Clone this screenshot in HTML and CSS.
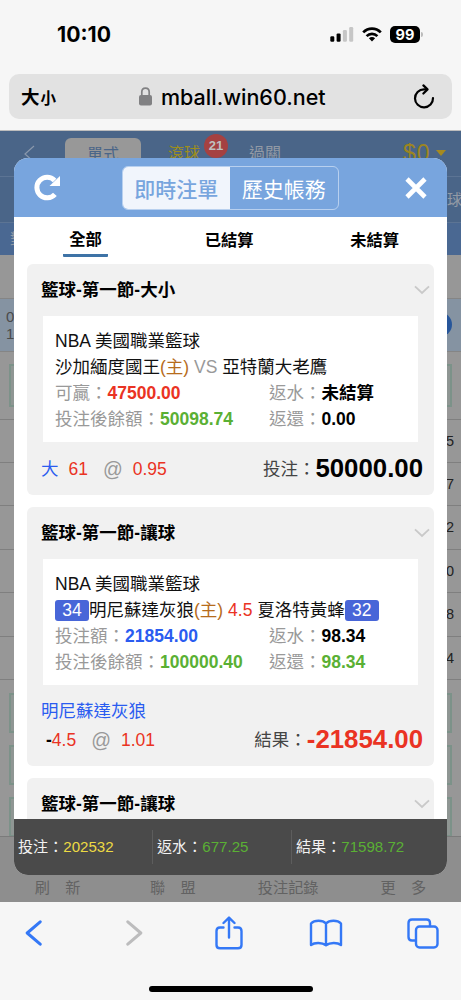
FILE: index.html
```
<!DOCTYPE html>
<html lang="zh-Hant">
<head>
<meta charset="utf-8">
<title>即時注單</title>
<link rel="stylesheet" href="styles.css">
</head>
<body>
<div class="phone">
  <header class="browser-top">
    <div class="status">
      <span class="time">10:10</span>
      <div class="status-icons">
        <svg class="signal" width="24" height="15" viewBox="0 0 24 15"><rect x="0.3" y="9.2" width="4" height="5.6" rx="1.2" fill="#000"/><rect x="6.6" y="6.4" width="4" height="8.4" rx="1.2" fill="#000"/><rect x="12.9" y="3" width="4" height="11.8" rx="1.2" fill="#c6c6c6"/><rect x="19.2" y="0" width="4" height="14.8" rx="1.2" fill="#c6c6c6"/></svg>
        <svg class="wifi" width="20" height="15" viewBox="0 0 20 15" fill="none" stroke="#000" stroke-width="2.7"><path d="M1.2 5.4C6.2 .4 13.8 .4 18.8 5.4"/><path d="M4.6 9.1C7.6 6.1 12.4 6.1 15.4 9.1"/><path d="M10 14.4L6.9 11.3C8.6 9.6 11.4 9.6 13.1 11.3Z" fill="#000" stroke="none"/></svg>
        <span class="battery">99</span><span class="battery-cap"></span>
      </div>
    </div>
    <div class="address">
      <span class="aa">大<small>小</small></span>
      <span class="url"><svg width="13" height="19" viewBox="0 0 13 19"><rect x="0" y="8" width="13" height="10.6" rx="2" fill="#818183"/><path d="M2.8 9V5C2.8-.1 10.2-.1 10.2 5V9" fill="none" stroke="#818183" stroke-width="1.7"/></svg>mball.win60.net</span>
      <svg class="reload" width="22" height="25" viewBox="0 0 22 25" fill="none" stroke="#000" stroke-width="2.2" stroke-linecap="round" stroke-linejoin="round"><path d="M12.5 5.3H11A9 9 0 1 0 20 14"/><path d="M10.4 1.4L14.5 5.4L10.4 9.5"/></svg>
    </div>
  </header>

  <main class="page">
    <div class="backdrop">
      <div class="nav">
        <svg class="nav-back" width="11" height="18" viewBox="0 0 11 18" fill="none" stroke="#8a98ac" stroke-width="1.2"><path d="M10 1L1 9L10 17"/></svg>
        <span class="nav-tab">單式</span>
        <span class="nav-live">滾球</span><span class="nav-badge">21</span>
        <span class="nav-pass">過關</span>
        <span class="nav-money">$0<i></i></span>
      </div>
      <div class="nav-row row-a"><span>球</span></div>
      <div class="nav-row row-b"><span>對</span></div>
      <div class="band-gray"></div>
      <div class="band-blue"><span>0<br>1</span><b>+</b></div>
      <div class="box-row"><div class="box"></div></div>
      <div class="line-row">5</div><div class="line-row mid">7</div>
      <div class="line-row">2</div><div class="line-row mid">0</div>
      <div class="line-row">8</div><div class="line-row mid">4</div>
      <div class="box-stack"><div class="box"></div><div class="box"></div><div class="box"></div></div>
      <nav class="tabbar"><span>刷　新</span><span>聯　盟</span><span>投注記錄</span><span>更　多</span></nav>
    </div>

    <section class="modal">
      <div class="modal-head">
        <svg width="28" height="27" viewBox="0 0 28 27"><path d="M20.6 6.4A10.3 10.3 0 1 0 20.9 20.4" fill="none" stroke="#fff" stroke-width="5"/><path d="M26 2V12H15.5Z" fill="#fff"/></svg>
        <div class="switch"><span class="on">即時注單</span><span>歷史帳務</span></div>
        <svg width="22" height="22" viewBox="0 0 22 22" stroke="#fff" stroke-width="4.6"><path d="M2 2L20 20M20 2L2 20"/></svg>
      </div>
      <div class="filters"><span class="active">全部</span><span>已結算</span><span>未結算</span></div>
      <div class="list">
        <article class="card">
          <h2>籃球-第一節-大小<svg class="chev" width="16" height="10" viewBox="0 0 16 10"><path d="M1 1.3L8 8L15 1.3"/></svg></h2>
          <div class="detail">
            <p>NBA 美國職業籃球</p>
            <p>沙加緬度國王<em>(主)</em> <i>VS</i> 亞特蘭大老鷹</p>
            <p class="pair"><span>可贏：<b class="red">47500.00</b></span><span>返水：<b>未結算</b></span></p>
            <p class="pair"><span>投注後餘額：<b class="green">50098.74</b></span><span>返還：<b>0.00</b></span></p>
          </div>
          <div class="result">
            <div class="odds"><span class="blue">大</span><span class="red line">61</span><span class="at">@</span><span class="red">0.95</span></div>
            <div class="sum">投注：<b>50000.00</b></div>
          </div>
        </article>
        <article class="card">
          <h2>籃球-第一節-讓球<svg class="chev" width="16" height="10" viewBox="0 0 16 10"><path d="M1 1.3L8 8L15 1.3"/></svg></h2>
          <div class="detail">
            <p>NBA 美國職業籃球</p>
            <p><span class="score">34</span>明尼蘇達灰狼<em>(主)</em> <span class="red">4.5</span> 夏洛特黃蜂<span class="score">32</span></p>
            <p class="pair"><span>投注額：<b class="blue">21854.00</b></span><span>返水：<b>98.34</b></span></p>
            <p class="pair"><span>投注後餘額：<b class="green">100000.40</b></span><span>返還：<b class="green">98.34</b></span></p>
          </div>
          <div class="pick blue">明尼蘇達灰狼</div>
          <div class="result second">
            <div class="odds"><span class="red"><b>-</b>4.5</span><span class="at">@</span><span class="red">1.01</span></div>
            <div class="sum">結果：<b class="red">-21854.00</b></div>
          </div>
        </article>
        <article class="card">
          <h2>籃球-第一節-讓球<svg class="chev" width="16" height="10" viewBox="0 0 16 10"><path d="M1 1.3L8 8L15 1.3"/></svg></h2>
          <div class="detail"></div>
        </article>
      </div>
      <footer class="totals"><span>投注：<b class="yellow">202532</b></span><span>返水：<b>677.25</b></span><span>結果：<b>71598.72</b></span></footer>
    </section>
  </main>

  <footer class="browser-bottom">
    <div class="tools">
      <svg width="17" height="26" viewBox="0 0 17 26" stroke="#3478f6"><path d="M15.2 1.8L2.2 13L15.2 24.2"/></svg>
      <svg class="forward" width="17" height="26" viewBox="0 0 17 26" stroke="#bcbcbd"><path d="M1.8 1.8L14.8 13L1.8 24.2"/></svg>
      <svg class="thin share" width="28" height="34" viewBox="0 0 28 34" stroke="#3478f6"><path d="M8.5 11.5H5Q1.5 11.5 1.5 15V29Q1.5 32.3 5 32.3H23Q26.5 32.3 26.5 29V15Q26.5 11.5 23 11.5H19.5M14 21.5V1.8M8.5 7L14 1.6L19.5 7"/></svg>
      <svg class="thin book" width="34" height="28" viewBox="0 0 34 28" stroke="#3478f6"><path d="M17 4.5C13.5 .8 5.5 .8 2 4.5V26C5.5 23.3 13 23.2 17 26.3C21 23.2 28.5 23.3 32 26V4.5C28.5 .8 20.5 .8 17 4.5V26"/></svg>
      <svg class="thin tabs" width="32" height="31" viewBox="0 0 32 31" stroke="#3478f6"><rect x="9" y="8.5" width="21.5" height="21" rx="3.5"/><path d="M8.5 22.5H5Q1.5 22.5 1.5 19V5Q1.5 1.5 5 1.5H19.5Q23 1.5 23 5V8"/></svg>
    </div>
    <div class="home"></div>
  </footer>
</div>
</body>
</html>
```
FILE: styles.css
```
* { box-sizing: border-box; }
body, h2, p { margin: 0; }
body { background: #f6f6f6; font: 17.5px/26px "Liberation Sans", "Noto Sans CJK TC", sans-serif; color: #111; }
i, em { font-style: normal; }
svg { display: block; flex: none; }
.phone { width: 461px; height: 1000px; overflow: hidden; display: flex; flex-direction: column; }

.browser-top { height: 131px; background: #f6f6f6; border-bottom: 1px solid #bdbdbd; flex: none; }
.status { height: 74px; padding: 22px 38px 0 57px; display: flex; justify-content: space-between; align-items: flex-start; color: #000; }
.time { font: 700 21.2px/25px Inter, sans-serif; }
.status-icons { display: flex; align-items: center; height: 24px; }
.signal { margin-right: 8px; }
.wifi { margin-right: 8px; }
.battery { width: 30px; height: 17px; border-radius: 5px; background: #000; color: #fff; font: 700 14.5px/17px Inter, sans-serif; text-align: center; }
.battery-cap { width: 2px; height: 5px; margin-left: 1px; border-radius: 0 2px 2px 0; background: #bbb; }
.address { margin: 0 9px; height: 45px; border-radius: 10px; background: #e2e2e2; display: flex; align-items: center; padding: 0 17px 0 12px; color: #000; }
.aa { font: 700 18.5px/30px "Noto Sans CJK TC", sans-serif; width: 118px; white-space: nowrap; }
.aa small { font-size: 15.5px; margin-left: 1px; }
.url { display: flex; align-items: center; gap: 9px; font: 500 21.5px/30px Inter, sans-serif; }
.reload { margin-left: auto; }

.page { height: 771px; position: relative; overflow: hidden; flex: none; }
.backdrop { height: 771px; background: #979797; display: flex; flex-direction: column; }
.nav { height: 46px; background: #4a6588; border-bottom: 1px solid #5c7494; display: flex; align-items: flex-start; font-size: 16px; }
.nav-back { margin: 14px 0 0 24px; }
.nav-tab { margin: 7px 0 0 30px; width: 76px; height: 35px; border-radius: 6px; background: #989898; color: #4a6588; text-align: center; line-height: 33px; }
.nav-live { margin: 10px 0 0 27px; color: #9d8e1c; }
.nav-badge { margin: 3px 0 0 4px; width: 24px; height: 24px; border-radius: 12px; background: #a54141; color: #c0c0c0; font-size: 13px; font-weight: 700; line-height: 24px; text-align: center; }
.nav-pass { margin: 10px 0 0 21px; color: #929aa5; }
.nav-money { margin: 9px 0 0 122px; color: #9d8520; font-size: 23px; letter-spacing: 1px; display: flex; align-items: center; gap: 5px; }
.nav-money i { border: 5px solid transparent; border-top: 6px solid #a58a20; border-bottom: 0; }
.nav-row { height: 46px; background: #4a6588; border-bottom: 1px solid #5c7494; color: #929aa5; font-size: 15px; line-height: 45px; }
.row-a { display: flex; justify-content: flex-end; }
.row-a span { width: 14px; }
.row-b { height: 33px; border: 0; padding-left: 10px; line-height: 32px; background: #4a6892; }
.band-gray { height: 43px; }
.band-blue { height: 54px; background: #8593a2; border-top: 1px solid #858585; border-bottom: 1px solid #858585; display: flex; justify-content: space-between; align-items: center; padding: 0 9px 0 6px; font-size: 15px; line-height: 17px; color: #4a4a4a; }
.band-blue span { text-align: right; }
.band-blue b { width: 25px; height: 25px; border-radius: 13px; background: #27569a; color: #aaa; line-height: 24px; text-align: center; }
.box-row { height: 68px; padding: 12px 9px; border-bottom: 1px solid #7f7f7f; }
.box { height: 43px; border: 2px solid #7c9289; background: #8f9693; }
.line-row { height: 43.4px; border-bottom: 1px solid #7f7f7f; color: #222; font-size: 14.5px; line-height: 43px; text-align: right; padding-right: 7px; flex: none; }
.box-stack { padding: 13px 9px 0; height: 156px; overflow: hidden; display: flex; flex-direction: column; gap: 12px; flex: none; }
.box-stack .box { height: 40px; flex: none; }
.tabbar { height: 66px; border-top: 1px solid #7b7b7b; background: #8e8e8e; color: #626262; flex: 1; display: grid; grid-template-columns: repeat(4, 1fr); font-size: 15.2px; line-height: 102px; text-align: center; }

.modal { position: absolute; left: 14px; top: 27px; width: 433px; height: 717px; border-radius: 14px; background: #fff; overflow: hidden; display: flex; flex-direction: column; }
.modal-head { height: 59px; background: #78a5de; display: flex; align-items: center; justify-content: space-between; padding: 0 20px; flex: none; }
.switch { display: flex; width: 217px; height: 44px; margin-right: 7px; border: 1px solid #b8d0ef; border-radius: 6px; overflow: hidden; color: #fff; font-size: 21px; line-height: 45px; text-align: center; }
.switch span { flex: 1; }
.switch .on { background: #f1f5fc; color: #78a5de; font-weight: 500; }
.filters { height: 47px; display: flex; justify-content: space-between; padding: 0 48px 0 49px; font-size: 16.3px; font-weight: 700; color: #000; line-height: 47px; flex: none; }
.filters span { height: 40px; }
.filters .active { width: 45px; text-align: center; line-height: 44px; border-bottom: 3px solid #3e73a6; border-radius: 1px; }
.list { flex: 1; overflow: hidden; padding: 0 13px; display: flex; flex-direction: column; gap: 12px; }
.card { background: #f1f1f1; border-radius: 6px; padding: 0 11px 0 14px; flex: none; }
h2 { height: 52px; font-size: 17.5px; line-height: 51px; font-weight: 700; color: #000; display: flex; justify-content: space-between; align-items: center; margin-right: -7px; }
.chev { fill: none; stroke: #c9c9c9; stroke-width: 1.8; }
.detail { margin: 0 5px 0 2px; height: 126px; background: #fff; padding: 12px 0 0 12px; white-space: nowrap; }
.detail p { height: 26px; }
.detail em { color: #b66c1c; }
.detail i { color: #999; }
.pair { color: #999; display: grid; grid-template-columns: 214px 1fr; }
.pair b { color: #000; }
.detail .red, .red { color: #ea3323; }
.pair .green { color: #5ab034; }
.pair .blue, .blue { color: #2a5cf0; }
.pair .red { color: #ea3323; }
.score { display: inline-block; width: 34px; height: 21px; border-radius: 3px; background: #4866d8; color: #fff; line-height: 21px; text-align: center; }
.result { height: 53px; display: flex; justify-content: space-between; align-items: center; }
.odds { display: flex; align-items: center; }
.odds .line { margin-left: 10px; }
.odds b { color: #000; }
.odds .at { color: #999; margin: 0 10px 0 15px; font-size: 19.5px; }
.sum { display: flex; align-items: center; color: #444; }
.sum b { font-size: 25.8px; line-height: 24px; padding-bottom: 2px; color: #000; }
.sum b.red { color: #ea3323; }
.pick { height: 39px; line-height: 52px; }
.second { height: 42px; padding-left: 5px; padding-bottom: 11px; }
.totals { height: 56px; background: #4a4a4a; color: #f2f2f2; font-size: 15.1px; line-height: 24px; display: flex; align-items: center; flex: none; }
.totals span { width: 139px; height: 34px; padding: 5px 0 0 4px; border-right: 1px solid #5d5d5d; }
.totals span:last-child { border: 0; }
.totals b { font-weight: 400; color: #5ab034; }
.totals .yellow { color: #edda43; }

.browser-bottom { height: 98px; background: #f6f6f6; display: flex; flex-direction: column; align-items: center; }
.tools { width: 461px; height: 62px; padding-left: 25px; display: flex; align-items: center; }
.tools svg { fill: none; stroke-width: 3; stroke-linecap: round; stroke-linejoin: round; }
.tools .thin { stroke-width: 2.4; }
.forward { margin-left: 84px; }
.share { margin-left: 72px; }
.book { margin-left: 66px; }
.tabs { margin-left: 64px; }
.home { margin-top: 22px; width: 164px; height: 6px; border-radius: 3px; background: #000; }
```
